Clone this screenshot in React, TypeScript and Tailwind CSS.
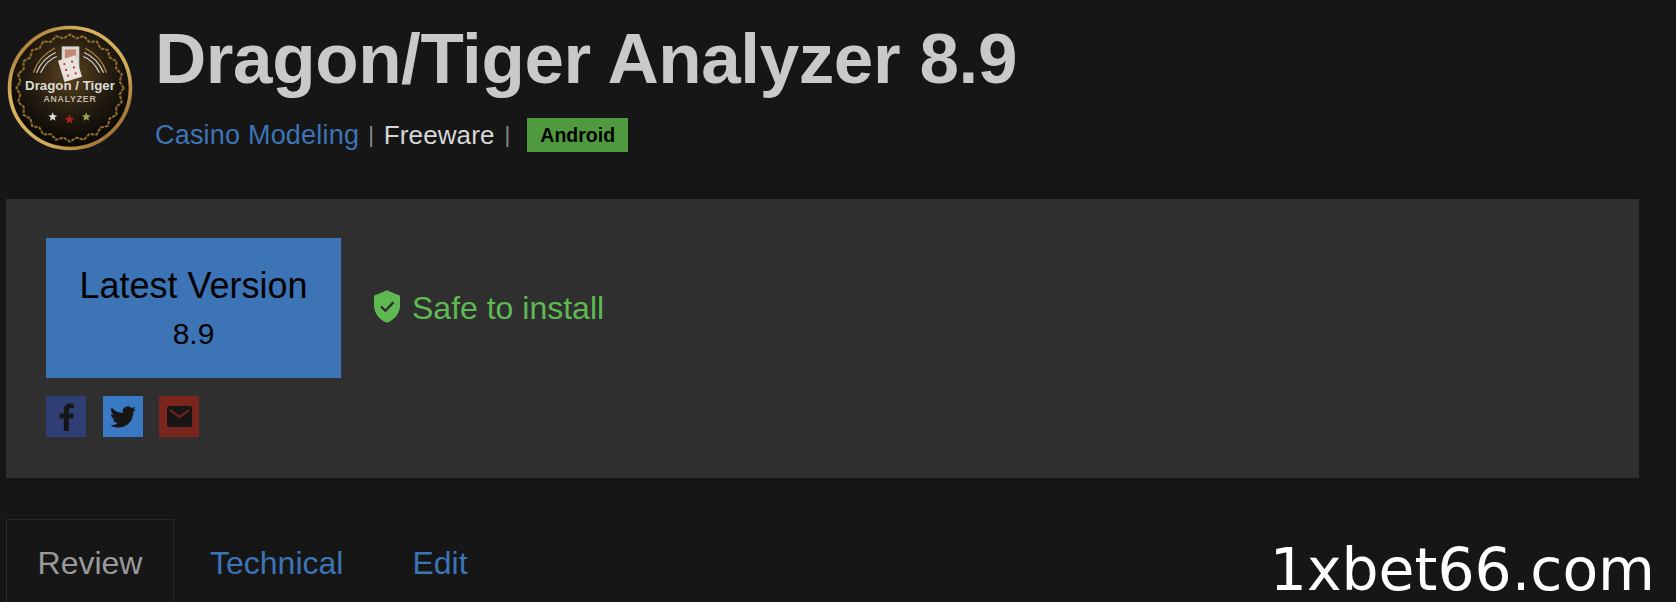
import React from "react";

function starPoints(cx: number, cy: number, r: number) {
  return Array.from({ length: 10 }, (_, i) => {
    const a = -Math.PI / 2 + (i * Math.PI) / 5;
    const d = i % 2 === 0 ? r : r * 0.45;
    return `${(cx + Math.cos(a) * d).toFixed(2)},${(cy + Math.sin(a) * d).toFixed(2)}`;
  }).join(" ");
}

function Logo() {
  const beads = Array.from({ length: 48 }, (_, i) => {
    const a = (i / 48) * Math.PI * 2;
    const r = 51 + (i % 2 === 0 ? 1.8 : -1.8);
    return [62 + Math.cos(a) * r, 62 + Math.sin(a) * r];
  });
  const chain = beads.map((p, i) => `${i ? "L" : "M"}${p[0].toFixed(1)} ${p[1].toFixed(1)}`).join(" ") + " Z";
  return (
    <svg width="126" height="126" viewBox="0 0 124 124" className="shrink-0">
      <defs>
        <linearGradient id="ring" x1="0" y1="0" x2="1" y2="1">
          <stop offset="0" stopColor="#8f5f28" />
          <stop offset="0.3" stopColor="#d8b45e" />
          <stop offset="0.65" stopColor="#d0ac58" />
          <stop offset="1" stopColor="#85501f" />
        </linearGradient>
        <radialGradient id="mid" cx="0.5" cy="0.38" r="0.55">
          <stop offset="0" stopColor="#5c4420" />
          <stop offset="0.6" stopColor="#241c10" />
          <stop offset="1" stopColor="#0c0a07" />
        </radialGradient>
      </defs>
      <circle cx="62" cy="62" r="59.5" fill="url(#mid)" stroke="url(#ring)" strokeWidth="3.6" />
      <path d={chain} fill="none" stroke="#8f6c30" strokeWidth="2" strokeDasharray="3.5 1" />
      <path d="M29 47 C33 37 41 30 48 27 M33 47 C37 39 43 33 49 31" fill="none" stroke="#d8d8d8" strokeWidth="1.1" />
      <path d="M26 47 C30 35 39 27 47 23" fill="none" stroke="#b58a3c" strokeWidth="1.1" />
      <path d="M95 47 C91 37 83 30 76 27 M91 47 C87 39 81 33 75 31" fill="none" stroke="#d8d8d8" strokeWidth="1.1" />
      <path d="M98 47 C94 35 85 27 77 23" fill="none" stroke="#b58a3c" strokeWidth="1.1" />
      <rect x="54" y="21" width="17" height="24" fill="#dcd8d4" stroke="#8c8c8c" strokeWidth="0.5" />
      <rect x="57" y="24" width="11" height="15" fill="#c08a72" />
      <g transform="rotate(-17 62 43)">
        <rect x="53" y="32" width="18" height="22" fill="#e8e2de" />
        <circle cx="58" cy="37" r="1.1" fill="#c8323a" />
        <circle cx="66" cy="37" r="1.1" fill="#c8323a" />
        <circle cx="58" cy="43" r="1.1" fill="#c8323a" />
        <circle cx="66" cy="43" r="1.1" fill="#c8323a" />
        <circle cx="58" cy="49" r="1.1" fill="#c8323a" />
        <circle cx="66" cy="49" r="1.1" fill="#c8323a" />
      </g>
      <text x="62" y="64" textAnchor="middle" fontFamily="'Liberation Sans', sans-serif" fontWeight="700" fontSize="13.1" fill="#dedbd4">Dragon / Tiger</text>
      <text x="62" y="76" textAnchor="middle" fontFamily="'Liberation Sans', sans-serif" fontWeight="700" fontSize="8.6" letterSpacing="0.8" fill="#bdb8aa">ANALYZER</text>
      <polygon points={starPoints(45, 90.5, 4.6)} fill="#dcdcdc" />
      <polygon points={starPoints(61.5, 93, 5)} fill="#a8231c" />
      <polygon points={starPoints(78, 90.5, 4.6)} fill="#94aa4c" />
    </svg>
  );
}

export default function App() {
  return (
    <div className="relative h-[602px] w-[1676px] overflow-hidden bg-[#161616] font-['Liberation_Sans',Arial,sans-serif]">
      <header className="flex h-[199px] items-start pl-[7px] pt-[25px]">
        <Logo />
        <div className="-mt-[8px] ml-[22px]">
          <h1 className="text-[71px] leading-[84px] font-bold tracking-[-0.4px] whitespace-nowrap text-[#c9c9c9]">
            Dragon/Tiger Analyzer 8.9
          </h1>
          <div className="mt-[17px] flex items-center leading-[34px]">
            <span className="text-[27px] tracking-[0.2px] text-[#3c74b6]">Casino Modeling</span>
            <span className="ml-[9px] text-[22px] text-[#8a8a8a]">|</span>
            <span className="ml-[10px] text-[26px] tracking-[0.1px] text-[#d6d6d6]">Freeware</span>
            <span className="ml-[10px] text-[22px] text-[#8a8a8a]">|</span>
            <span className="ml-[17px] flex h-[34px] w-[101px] items-center justify-center bg-[#4f9a3f] text-[19.5px] font-bold text-black">
              Android
            </span>
          </div>
        </div>
      </header>

      <section className="ml-[6px] h-[279px] w-[1633px] bg-[#2f2f2f] pt-[39px] pl-[40px]">
        <div className="flex items-center">
          <div className="flex h-[140px] w-[295px] flex-col items-center justify-center bg-[#3c74b6] text-black">
            <div className="-mt-[2px] text-[36px] leading-[46px]">Latest Version</div>
            <div className="mt-[7px] text-[30px] leading-[36px]">8.9</div>
          </div>
          <div className="ml-[33px] flex items-center text-[#5fb952]">
            <svg width="26" height="33" viewBox="0 0 24 30" className="-mt-[3px] shrink-0">
              <path d="M12 0 L24 5 V14 C24 22 18 27.5 12 30 C6 27.5 0 22 0 14 V5 Z" fill="#5fb952" />
              <path d="M6.5 15 L10.5 19 L18 11" fill="none" stroke="#2f2f2f" strokeWidth="2.2" />
            </svg>
            <span className="ml-[12px] text-[32px] leading-[40px]">Safe to install</span>
          </div>
        </div>
        <div className="mt-[18px] flex gap-[16.5px]">
          <div className="flex h-[41px] w-[40px] items-center justify-center bg-[#2f3f74]">
            <svg width="15" height="28" viewBox="0 0 15 28">
              <path d="M9.8 28 V15.4 H14 L14.6 10.5 H9.8 V7.4 C9.8 6 10.2 5 12.2 5 H14.8 V0.6 C14.3 0.5 12.8 0.4 11 0.4 C7.3 0.4 4.8 2.7 4.8 6.8 V10.5 H0.6 V15.4 H4.8 V28 Z" fill="#161616" />
            </svg>
          </div>
          <div className="flex h-[41px] w-[40px] items-center justify-center bg-[#3a79c4]">
            <svg width="26" height="26" viewBox="0 0 24 24">
              <path d="M23.95 4.57a10 10 0 0 1-2.82.77 4.96 4.96 0 0 0 2.16-2.72c-.95.55-2 .95-3.12 1.17a4.92 4.92 0 0 0-8.38 4.48C7.69 8.1 4.07 6.13 1.64 3.16a4.82 4.82 0 0 0-.67 2.48c0 1.71.87 3.21 2.19 4.1a4.9 4.9 0 0 1-2.23-.62v.06a4.92 4.92 0 0 0 3.95 4.83 4.9 4.9 0 0 1-2.21.08 4.93 4.93 0 0 0 4.6 3.42A9.87 9.87 0 0 1 0 19.54a13.94 13.94 0 0 0 7.55 2.21c9.05 0 14-7.5 14-13.98 0-.21 0-.42-.02-.63a9.94 9.94 0 0 0 2.46-2.55z" fill="#161616" />
            </svg>
          </div>
          <div className="flex h-[41px] w-[40px] items-center justify-center bg-[#7a251e]">
            <svg width="25" height="21" viewBox="0 0 25 21">
              <rect x="0" y="0" width="25" height="21" rx="2.5" fill="#161616" />
              <path d="M3 4 L12.5 11 L22 4" fill="none" stroke="#7a251e" strokeWidth="2" />
            </svg>
          </div>
        </div>
      </section>

      <nav className="mt-[41px] ml-[6px] flex text-[32px] leading-[36px]">
        <div className="h-[83px] w-[168px] border border-b-0 border-[#2a2a2a] pt-[25px] text-center text-[#9a9a9a]">Review</div>
        <div className="ml-[36px] pt-[26px] text-[#3c74b6]">Technical</div>
        <div className="ml-[69px] pt-[26px] text-[#3c74b6]">Edit</div>
      </nav>

      <div className="absolute top-[538px] right-[21px] font-['DejaVu_Sans',sans-serif] text-[58.4px] leading-[64px] text-white">
        1xbet66.com
      </div>
    </div>
  );
}
